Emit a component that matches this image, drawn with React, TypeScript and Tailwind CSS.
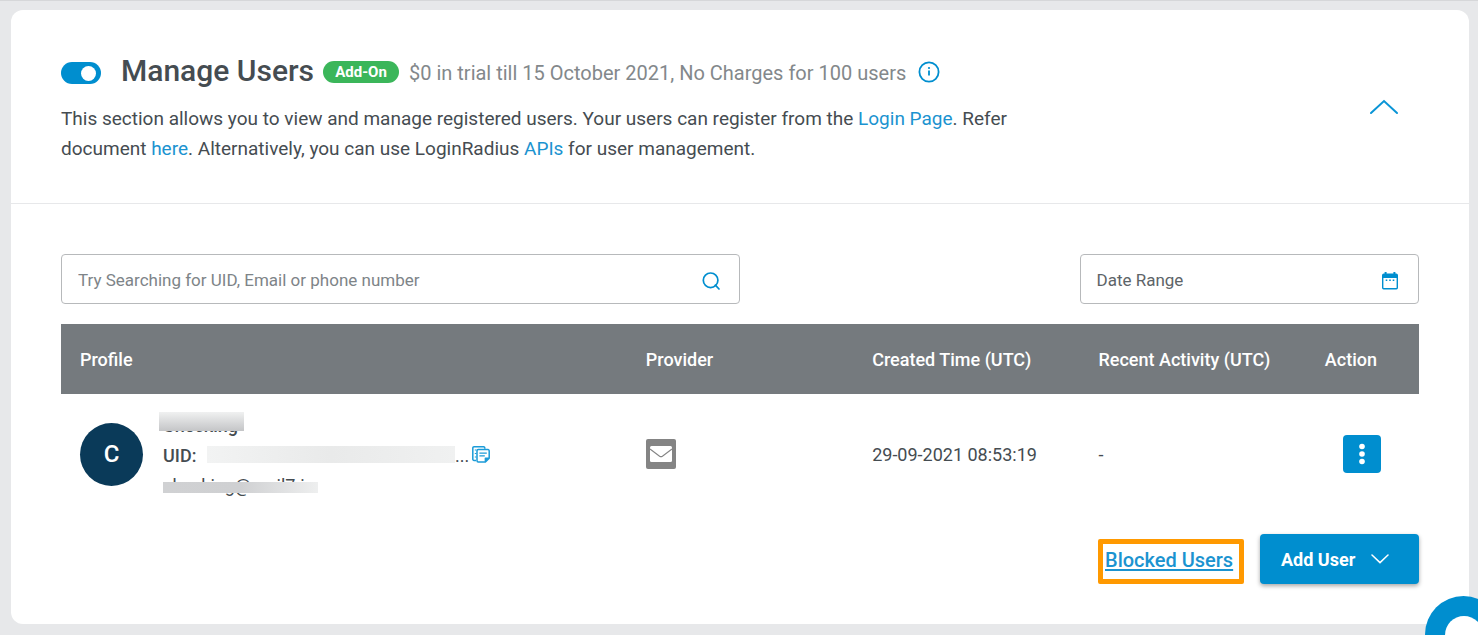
import React from "react";

const linkClass = "text-[#1b93d0] hover:underline";

function InfoIcon() {
  return (
    <svg width="22" height="22" viewBox="0 0 22 22" fill="none" aria-hidden="true">
      <circle cx="11" cy="11" r="9.6" stroke="#008ecf" strokeWidth="1.8" />
      <path d="M11 9.6v5" stroke="#008ecf" strokeWidth="1.8" />
      <circle cx="11" cy="7" r="1.1" fill="#008ecf" />
    </svg>
  );
}

function SearchIcon() {
  return (
    <svg width="18" height="18" viewBox="0 0 18 18" fill="none" stroke="#008ecf" strokeWidth="1.7" strokeLinecap="round" aria-hidden="true">
      <circle cx="8.6" cy="8.3" r="7.3" />
      <path d="M13.4 13.2L17 17" />
    </svg>
  );
}

function CalendarIcon() {
  return (
    <svg width="16" height="18" viewBox="0 0 16 18" aria-hidden="true">
      <path
        fill="#008ecf"
        fillRule="evenodd"
        d="M2.6 0h2v1.4h6.8V0h2v1.4h.8A1.8 1.8 0 0 1 16 3.2v12.6a1.6 1.6 0 0 1-1.6 1.6H1.6A1.6 1.6 0 0 1 0 15.8V3.2a1.8 1.8 0 0 1 1.8-1.8h.8zM1.4 6v9.4c0 .4.2.6.6.6h12c.4 0 .6-.2.6-.6V6z"
      />
      <path fill="#008ecf" d="M3.7 7.6h1.6v1.5H3.7zM7.2 7.6h1.6v1.5H7.2zM10.7 7.6h1.6v1.5h-1.6z" />
    </svg>
  );
}

function CopyIcon() {
  return (
    <svg width="18" height="17" viewBox="0 0 18 17" fill="none" stroke="#1b9bd8" strokeWidth="1.5" strokeLinejoin="round" aria-hidden="true">
      <path d="M4 14.4H2A1.2 1.2 0 0 1 .8 13.2V2A1.2 1.2 0 0 1 2 .8h9.6A1.2 1.2 0 0 1 12.8 2v.8" />
      <path d="M2.8 4h1.6M2.8 7.5h1.6M2.8 11h1.6" strokeWidth="1.2" />
      <path d="M6.2 3.6h9.8a1.2 1.2 0 0 1 1.2 1.2v7.4l-3.8 3.8H6.2A1.2 1.2 0 0 1 5 14.8v-10a1.2 1.2 0 0 1 1.2-1.2z" fill="#fff" />
      <path d="M13.4 15.8v-3.6H17" fill="#1b9bd8" />
      <path d="M7.4 7.2h7.4M7.4 9.8h5.4" strokeWidth="1.3" />
    </svg>
  );
}

function MailIcon() {
  return (
    <svg width="30" height="30" viewBox="0 0 30 30" role="img" aria-label="Email">
      <rect width="30" height="30" rx="2" fill="#848484" />
      <rect x="4" y="7" width="22" height="16" rx="1.5" fill="#fff" />
      <path d="M4 10l9.6 7.2c.9.6 1.9.6 2.8 0L26 10" fill="none" stroke="#848484" strokeWidth="1.1" />
    </svg>
  );
}

function Header() {
  return (
    <header className="flex items-center justify-between border-b border-[#e7e8ea] px-[50px] pt-10 pb-[39px]">
      <div className="max-w-[980px]">
        <div className="mb-[10px] flex h-11 items-center">
          <input
            type="checkbox"
            defaultChecked
            aria-label="Enable Manage Users"
            className="mt-0.5 mr-5 h-[22px] w-10 shrink-0 appearance-none rounded-full bg-[#9aa0a4] p-1 before:block before:size-[15px] before:rounded-full before:bg-white checked:bg-[#008ecf] checked:pl-5"
          />
          <h1 className="mr-[9px] pb-1 text-[30px] font-medium whitespace-nowrap">Manage Users</h1>
          <span className="mr-2.5 flex h-[22px] w-[76px] shrink-0 items-center justify-center rounded-full bg-[#3bb65a] text-[15px] font-bold text-white">
            Add-On
          </span>
          <span className="mt-0.5 mr-3 text-[20px] whitespace-nowrap text-[#83888b]">
            $0 in trial till 15 October 2021, No Charges for 100 users
          </span>
          <button type="button" aria-label="Pricing information">
            <InfoIcon />
          </button>
        </div>
        <p className="text-[19px] leading-[30px]">
          This section allows you to view and manage registered users. Your users can register from the{" "}
          <a href="#login" className={linkClass}>Login Page</a>. Refer document{" "}
          <a href="#document" className={linkClass}>here</a>. Alternatively, you can use LoginRadius{" "}
          <a href="#apis" className={linkClass}>APIs</a> for user management.
        </p>
      </div>
      <button type="button" aria-label="Collapse section" className="mr-5">
        <svg width="30" height="16" viewBox="0 0 30 16" fill="none" stroke="#0a95d6" strokeWidth="2" strokeLinecap="round" aria-hidden="true">
          <path d="M2 14L15 2L28 14" />
        </svg>
      </button>
    </header>
  );
}

function Filters() {
  return (
    <div className="mb-5 flex justify-between">
      <div className="flex h-[50px] w-1/2 items-center rounded border border-[#b7b9bb] pt-1 pr-[19px] pl-4">
        <input
          type="text"
          aria-label="Search users"
          placeholder="Try Searching for UID, Email or phone number"
          className="min-w-0 flex-1 text-[17px] outline-none placeholder:text-[#7e8488]"
        />
        <button type="button" aria-label="Search">
          <SearchIcon />
        </button>
      </div>
      <button type="button" className="flex h-[50px] w-1/4 items-center justify-between rounded border border-[#b7b9bb] pt-1 pr-5 pl-4 text-[17px] text-[#5d6468]">
        Date Range
        <CalendarIcon />
      </button>
    </div>
  );
}

function UsersTable() {
  return (
    <table className="w-full table-fixed border-collapse text-left">
      <thead>
        <tr className="h-[70px] bg-[#757a7e] text-[18px] whitespace-nowrap text-white">
          <th scope="col" className="w-5/12 px-[19px] font-medium">Profile</th>
          <th scope="col" className="w-2/12 px-[19px] font-medium">Provider</th>
          <th scope="col" className="w-2/12 px-[19px] font-medium">Created Time (UTC)</th>
          <th scope="col" className="w-2/12 px-[19px] font-medium">Recent Activity (UTC)</th>
          <th scope="col" className="w-1/12 px-[19px] font-medium">Action</th>
        </tr>
      </thead>
      <tbody>
        <tr className="h-[120px] text-[18px]">
          <td className="px-[19px]">
            <div className="flex items-center gap-5">
              <span className="flex size-[63px] items-center justify-center rounded-full bg-[#0a3a59] text-[24px] font-medium text-white">
                C
              </span>
              <div className="pt-1 leading-[30px]">
                <div className="relative w-max font-medium">
                  Checking
                  <span className="absolute top-px -left-1 h-[19px] w-[85px] bg-linear-to-b from-[#f0f1f1] to-[#c4c5c7]" />
                </div>
                <div className="flex items-center">
                  <span className="w-11 font-medium">UID:</span>
                  <span className="mb-1 h-[17px] w-[248px] bg-linear-to-r from-[#f2f3f3] via-[#e9eaea] to-[#f0f1f1]" />
                  <span className="mr-[3px]">...</span>
                  <button type="button" aria-label="Copy UID" className="mb-1">
                    <CopyIcon />
                  </button>
                </div>
                <div className="relative w-max">
                  checking@mail7.io
                  <span className="absolute top-[11px] left-0 h-[11px] w-[155px] bg-linear-to-r from-[#d0d1d3] via-[#cfd0d2] to-[#eeefef]" />
                </div>
              </div>
            </div>
          </td>
          <td className="px-[19px]">
            <MailIcon />
          </td>
          <td className="px-[19px] whitespace-nowrap">29-09-2021 08:53:19</td>
          <td className="px-[19px]">-</td>
          <td className="text-center">
            <button type="button" aria-label="User actions" className="inline-flex size-[38px] items-center justify-center rounded bg-[#008ecf] align-middle">
              <svg width="6" height="22" viewBox="0 0 6 22" fill="#fff" aria-hidden="true">
                <circle cx="3" cy="3.5" r="2.8" />
                <circle cx="3" cy="11" r="2.8" />
                <circle cx="3" cy="18.5" r="2.8" />
              </svg>
            </button>
          </td>
        </tr>
      </tbody>
    </table>
  );
}

export default function App() {
  return (
    <div className="border-t border-[#d6d7d9] bg-[#e7e8ea] pt-[9px] pr-[9px] pb-[11px] pl-[11px] font-['Roboto',sans-serif] text-[#454c51]">
      <main className="rounded-xl bg-white">
        <Header />
        <section className="px-[50px] pt-[50px] pb-10">
          <Filters />
          <UsersTable />
          <div className="mt-5 flex items-end justify-end gap-4">
            <div className="flex h-[45px] w-[146px] rounded-xs border-[5px] border-[#ff9900] pl-0.5">
              <a href="#blocked" className="text-[20px] leading-8 font-medium whitespace-nowrap text-[#1b93d0] underline decoration-2 underline-offset-2">
                Blocked Users
              </a>
            </div>
            <button type="button" className="flex h-[50px] w-[159px] items-center gap-4 rounded bg-[#008ecf] pl-[21px] text-[18px] font-bold text-white shadow-[0_2px_4px_rgba(0,0,0,0.35)]">
              Add User
              <svg width="18" height="10" viewBox="0 0 18 10" fill="none" stroke="#fff" strokeWidth="1.5" strokeLinecap="round" aria-hidden="true">
                <path d="M1 1L9 8.6L17 1" />
              </svg>
            </button>
          </div>
        </section>
      </main>
      <button type="button" aria-label="Open chat" className="fixed -right-6 -bottom-[38px] flex size-[77px] items-center justify-center rounded-full bg-[#008ecf]">
        <span className="size-[38px] rounded-full bg-white" />
      </button>
    </div>
  );
}
